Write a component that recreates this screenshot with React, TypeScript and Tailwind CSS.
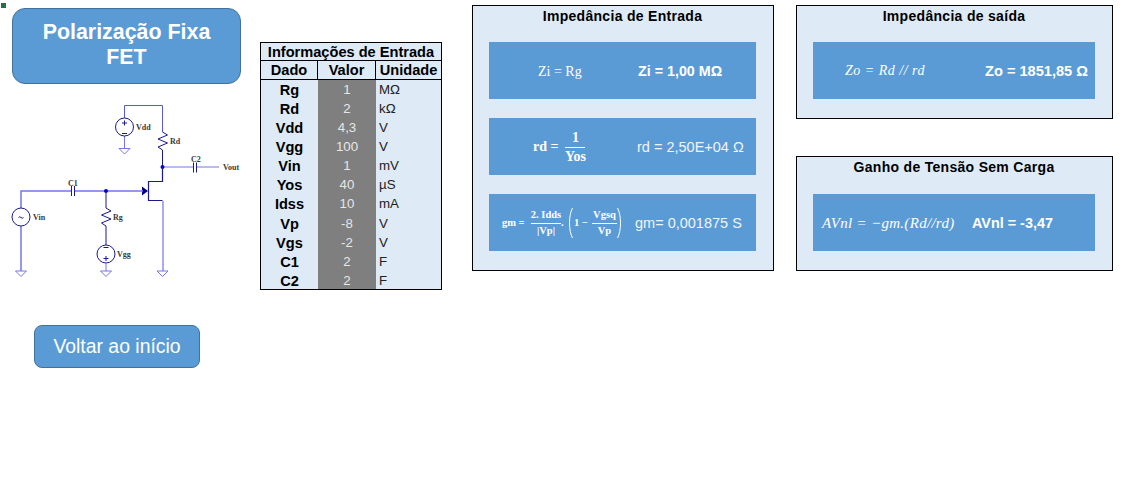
const sans = "font-['Liberation_Sans',Arial,sans-serif]";
const math = "font-['Liberation_Serif','Times_New_Roman',serif]";

const rows = [
  ["Rg", "1", "MΩ"],
  ["Rd", "2", "kΩ"],
  ["Vdd", "4,3", "V"],
  ["Vgg", "100", "V"],
  ["Vin", "1", "mV"],
  ["Yos", "40", "µS"],
  ["Idss", "10", "mA"],
  ["Vp", "-8", "V"],
  ["Vgs", "-2", "V"],
  ["C1", "2", "F"],
  ["C2", "2", "F"],
];

function Ground({ x, y, stroke }: { x: number; y: number; stroke: string }) {
  return <polygon points={`${x - 5.5},${y} ${x + 5.5},${y} ${x},${y + 5.5}`} fill="none" stroke={stroke} strokeWidth="1" />;
}

function Circuit() {
  const dark = "#1a1a8c";
  const wire = "#7474ea";
  const label = { fontFamily: "'Liberation Serif', serif", fontSize: 8, fontWeight: 700, fill: "#3a3a3a" };
  return (
    <svg width="260" height="190" viewBox="0 100 260 190" className="block">
      {/* vdd branch */}
      <path d="M124.5 118V105.5H162.5V132" fill="none" stroke="#5a5ad0" strokeWidth="1" />
      <path d="M124.5 136V148" fill="none" stroke={wire} strokeWidth="1" />
      <circle cx="124.5" cy="127" r="9" fill="none" stroke={dark} strokeWidth="1" />
      <path d="M124.5 120.5v5M122 123h5M122 133.5h5" stroke={dark} strokeWidth="1" fill="none" />
      <Ground x={124.5} y={148.5} stroke={wire} />
      <path d="M162.5 132l5 3-9.5 4 9.5 4-9.5 4 4.5 3V167" fill="none" stroke={dark} strokeWidth="1" />
      {/* output */}
      <path d="M162.5 167H193M197 167H219" stroke={wire} strokeWidth="1" fill="none" />
      <path d="M193.5 162.5v10M196.5 162.5v10" stroke={dark} strokeWidth="1" fill="none" />
      <circle cx="162.5" cy="167" r="2" fill="#0000d0" />
      {/* fet */}
      <path d="M162.5 167V181.5H148.5V200.5H162.5" fill="none" stroke={dark} strokeWidth="1.2" />
      <path d="M163 201V271" stroke={wire} strokeWidth="1.2" />
      <polygon points="142,186.5 148,191 142,195.5" fill="#000080" />
      <Ground x={162.5} y={271} stroke={wire} />
      {/* input */}
      <path d="M21 208V191H71M75 191H143" fill="none" stroke={wire} strokeWidth="1.5" />
      <path d="M71.5 186v10M74.5 186v10" stroke={dark} strokeWidth="1" fill="none" />
      <circle cx="106" cy="191" r="2" fill="#0000d0" />
      <path d="M21 226V271" stroke={wire} strokeWidth="1.5" />
      <circle cx="21" cy="217" r="9" fill="none" stroke={dark} strokeWidth="1" />
      <path d="M18.5 217.5q1.2-1.5 2.5 0t2.5 0" stroke={dark} fill="none" strokeWidth="1" />
      <Ground x={21} y={271} stroke={wire} />
      {/* gate resistor */}
      <path d="M106 193V208l5 3-9.5 4 9.5 4-9.5 4 4.5 3V245" fill="none" stroke={dark} strokeWidth="1" />
      <circle cx="106" cy="254" r="9" fill="none" stroke={dark} strokeWidth="1" />
      <path d="M103.5 247.5h5M106 256v5M103.5 258.5h5" stroke={dark} strokeWidth="1" fill="none" />
      <path d="M106 263V271" stroke={wire} strokeWidth="1" />
      <Ground x={106} y={271} stroke={wire} />
      <g style={label}>
        <text x="136" y="130">Vdd</text>
        <text x="170" y="144">Rd</text>
        <text x="191" y="162">C2</text>
        <text x="223" y="170">Vout</text>
        <text x="68" y="186">C1</text>
        <text x="33" y="220">Vin</text>
        <text x="113" y="220">Rg</text>
        <text x="117" y="257">Vgg</text>
      </g>
    </svg>
  );
}

function Paren({ flip = false }: { flip?: boolean }) {
  return (
    <svg width="6" height="32" viewBox="0 0 6 32" className={flip ? "-scale-x-100" : ""}>
      <path d="M5.5 1C1.5 8 1.5 24 5.5 31" fill="none" stroke="white" strokeWidth="1" />
    </svg>
  );
}

function Formula({ children, className = "" }: { children: React.ReactNode; className?: string }) {
  return <div className={`flex h-[57px] items-center bg-[#5b9bd5] text-white ${className}`}>{children}</div>;
}

function Frac({ top, bottom, className = "", rowClass = "" }: { top: string; bottom: string; className?: string; rowClass?: string }) {
  return (
    <span className={`inline-flex flex-col items-center ${className}`}>
      <span className={`flex items-center justify-center font-bold whitespace-nowrap ${rowClass}`}>{top}</span>
      <span className={`flex items-center justify-center self-stretch border-t border-white font-bold whitespace-nowrap ${rowClass}`}>{bottom}</span>
    </span>
  );
}

function PanelTitle({ children, className = "h-[36px]" }: { children: React.ReactNode; className?: string }) {
  return <div className={`pt-[1px] text-center text-[14px] leading-[18px] font-bold tracking-[0.3px] text-black ${className}`}>{children}</div>;
}

export default function App() {
  return (
    <div className={`relative min-h-[483px] w-[1125px] overflow-hidden bg-white ${sans}`}>
      {/* selected cell handle */}
      <div className="absolute top-[3px] left-[1px] h-[5px] w-[5px] bg-[#217346]" />

      <div className="flex items-start">
        {/* left column */}
        <div className="w-[260px] shrink-0">
          <div className="mt-[8px] ml-[12px] flex h-[76px] w-[229px] items-center justify-center rounded-[13px] border border-[#41719c] bg-[#5b9bd5] pb-[2px] text-center text-[21.4px] leading-[25px] font-bold text-white">
            <span>Polarização Fixa<br />FET</span>
          </div>
          <div className="mt-[16px]">
            <Circuit />
          </div>
          <div className="mt-[35px] ml-[34px] flex h-[43px] w-[166px] items-center justify-center rounded-[8px] border border-[#41719c] bg-[#5b9bd5] text-[19.4px] text-white">
            Voltar ao início
          </div>
        </div>

        {/* input table */}
        <div className="mt-[42px] h-[248px] w-[182px] shrink-0 overflow-hidden border border-black bg-[#deeaf6] text-[13.3px] leading-[19px]">
          <div className="h-[18px] border-b border-black text-center text-[14.6px] leading-[18px] font-bold text-black">Informações de Entrada</div>
          <div className="grid h-[19px] grid-cols-[57px_58px_1fr] border-b border-black text-[14.6px] font-bold text-black">
            <div className="border-r border-black text-center leading-[18px]">Dado</div>
            <div className="border-r border-black text-center leading-[18px]">Valor</div>
            <div className="text-center leading-[18px]">Unidade</div>
          </div>
          {rows.map((r) => (
            <div key={r[0]} className="grid h-[19.09px] grid-cols-[57px_58px_1fr]">
              <div className="pt-[1px] text-center text-[14.6px] font-bold text-black">{r[0]}</div>
              <div className="bg-[#7f7f7f] text-center text-[#e6e6e6]">{r[1]}</div>
              <div className="pl-[3px] text-[#222]">{r[2]}</div>
            </div>
          ))}
        </div>

        {/* impedancia de entrada */}
        <div className="mt-[5px] ml-[30px] h-[266px] w-[302px] shrink-0 border border-black bg-[#deeaf6] pr-[17px] pl-[16px]">
          <PanelTitle>Impedância de Entrada</PanelTitle>
          <div className="flex flex-col gap-[19px]">
            <Formula className="pt-[2px]">
              <span className={`ml-[49px] w-[100px] ${math} text-[14px]`}>Zi = Rg</span>
              <span className="text-[14.3px] font-bold">Zi = 1,00 MΩ</span>
            </Formula>
            <Formula>
              <span className={`ml-[44px] flex w-[104px] items-center gap-[7px] ${math} text-[14px] font-bold`}>
                rd = <Frac top="1" bottom="Yos" className="w-[20px]" rowClass="h-[19px]" />
              </span>
              <span className="pt-[3px] text-[14.5px] text-[#f0f4fa]">rd = 2,50E+04 Ω</span>
            </Formula>
            <Formula>
              <span className={`ml-[13px] flex w-[133px] items-center ${math} text-[10.5px]`}>
                <span className="w-[29px] font-bold whitespace-nowrap">gm =</span>
                <Frac top="2. Idds" bottom="|Vp|" className="w-[30px]" rowClass="h-[16px]" />
                <span className="w-[6px] font-bold">.</span>
                <Paren />
                <span className="ml-[1px] w-[18px] font-bold whitespace-nowrap">1 −</span>
                <Frac top="Vgsq" bottom="Vp" className="w-[25px]" rowClass="h-[16px]" />
                <Paren flip />
              </span>
              <span className="pt-[2px] text-[14.5px] text-[#f0f4fa]">gm= 0,001875 S</span>
            </Formula>
          </div>
        </div>

        {/* saida + ganho */}
        <div className="mt-[5px] ml-[22px] flex w-[317px] shrink-0 flex-col gap-[37px]">
          <div className="h-[114px] border border-black bg-[#deeaf6] pr-[17px] pl-[16px]">
            <PanelTitle>Impedância de saída</PanelTitle>
            <Formula className="pt-[2px]">
              <span className={`ml-[32px] w-[140px] ${math} pb-[3px] text-[14px] tracking-[0.5px] italic`}>Zo = Rd // rd</span>
              <span className="text-[14.6px] font-bold">Zo = 1851,85 Ω</span>
            </Formula>
          </div>
          <div className="h-[115px] border border-black bg-[#deeaf6] pr-[17px] pl-[16px]">
            <PanelTitle className="h-[37px]">Ganho de Tensão Sem Carga</PanelTitle>
            <Formula className="pt-[2px]">
              <span className={`ml-[9px] w-[150px] ${math} text-[15px] tracking-[0.3px] italic`}>AVnl = −gm.(Rd//rd)</span>
              <span className="text-[14.4px] font-bold">AVnl = -3,47</span>
            </Formula>
          </div>
        </div>
      </div>
    </div>
  );
}
